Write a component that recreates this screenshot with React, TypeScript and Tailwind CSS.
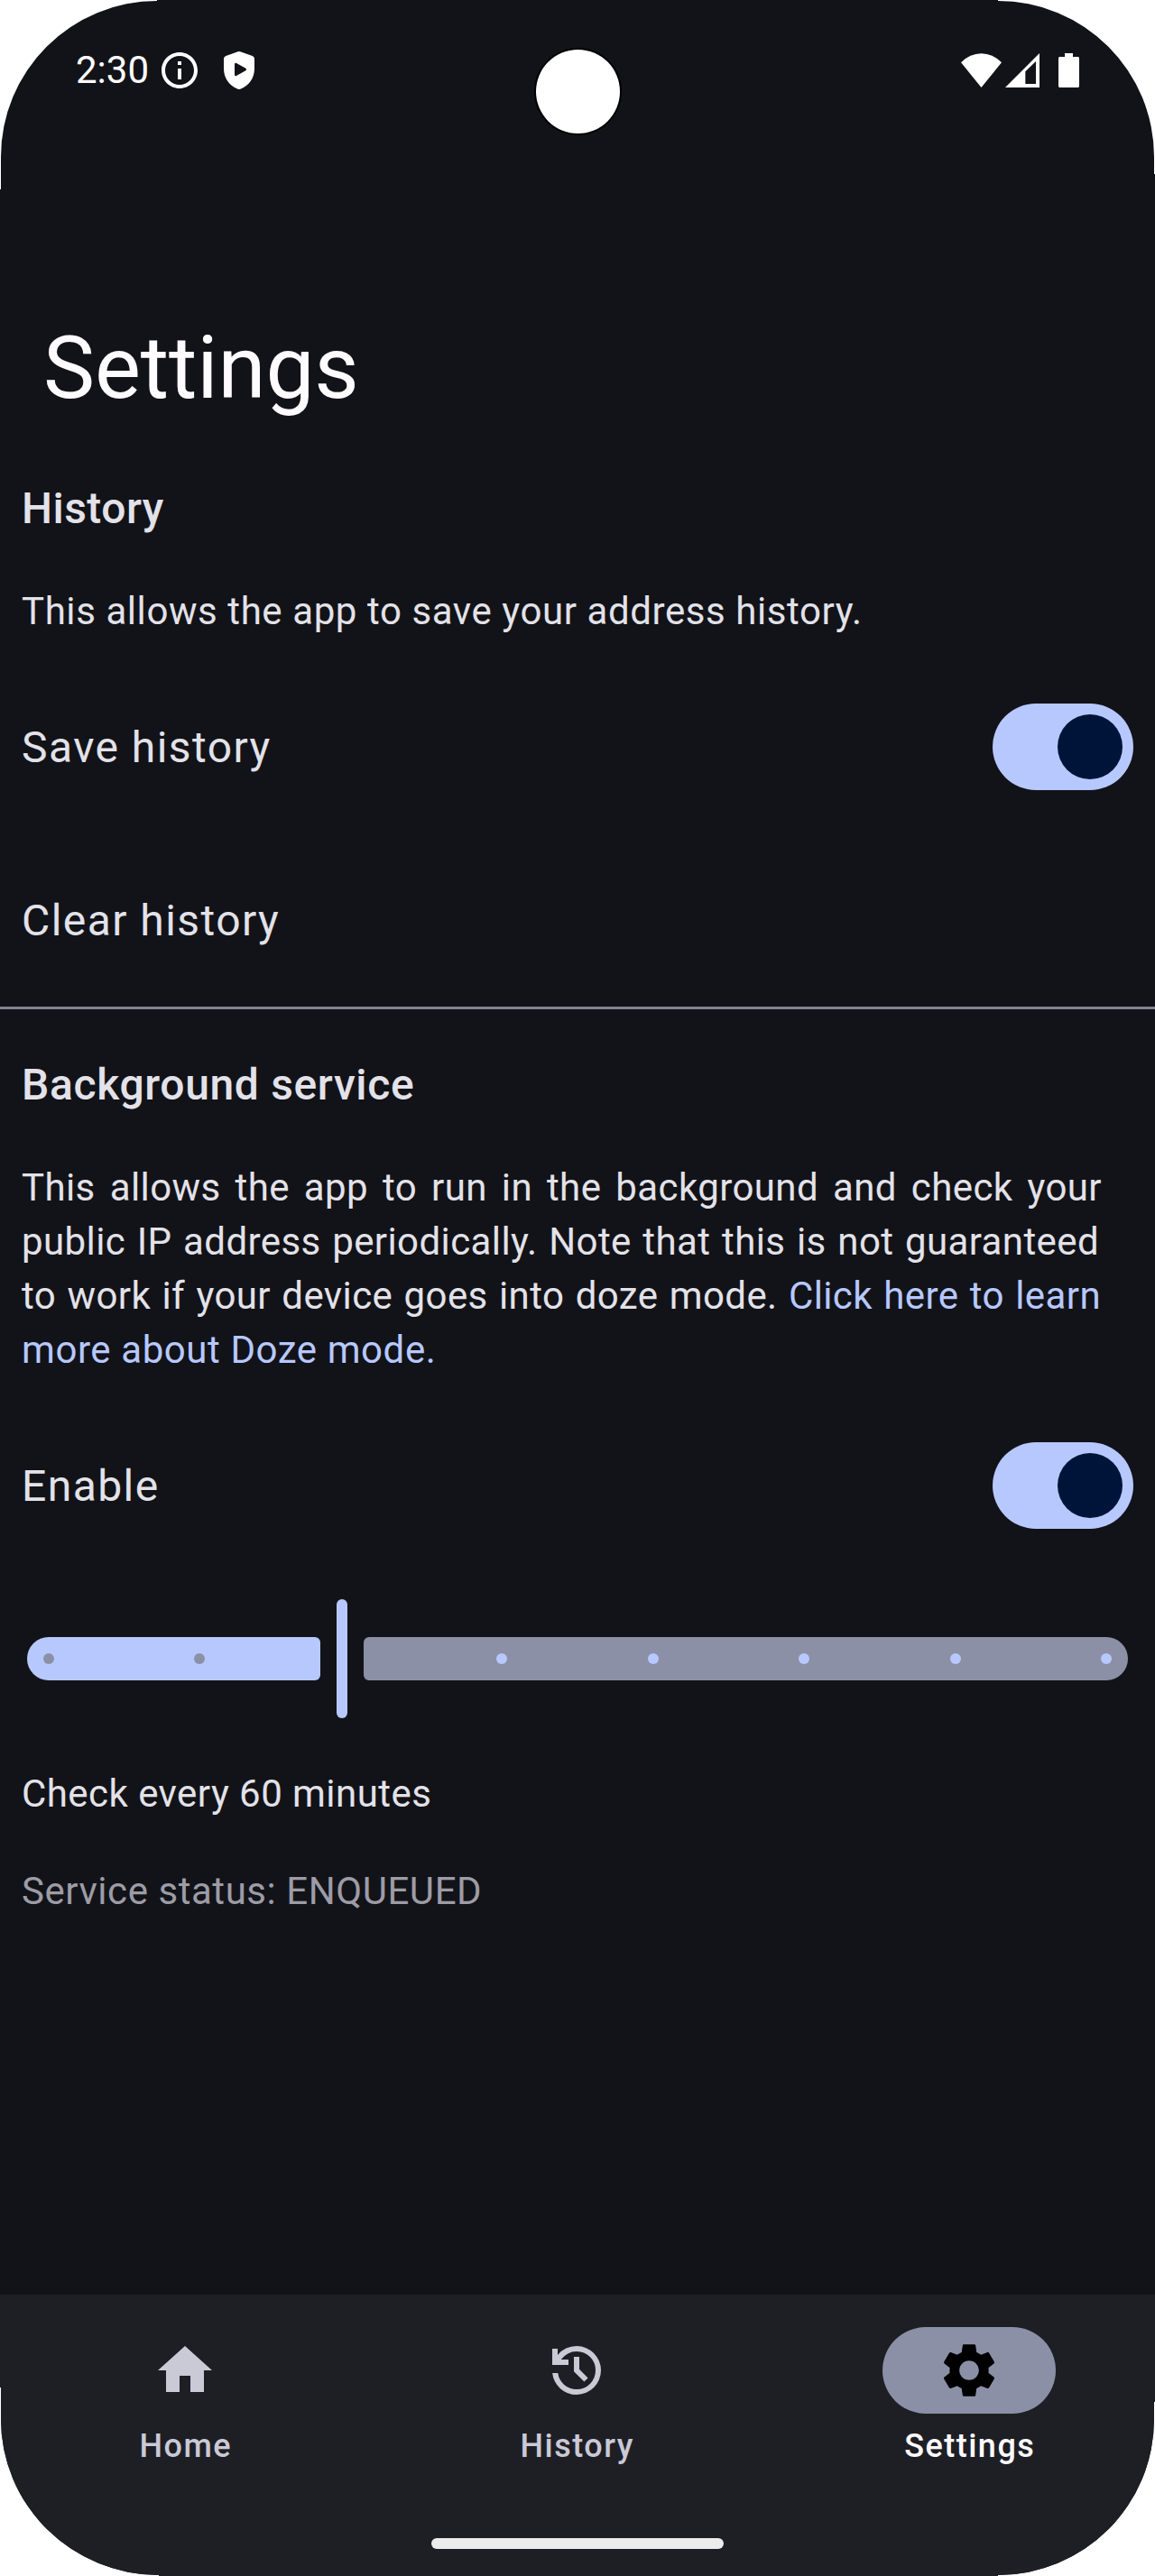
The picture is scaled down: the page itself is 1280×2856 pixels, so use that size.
import type { ReactNode } from "react";
import { MdHome, MdSettings } from "react-icons/md";

const SCREEN_CLIP =
  "path('M0 210 H1 V174 A173 173 0 0 1 174 1 V0 H1106 V1 A173 173 0 0 1 1279 174 V193 H1280 V2663 H1279 V2682 A173 173 0 0 1 1106 2855 V2856 H176 V2855 A175 173 0 0 1 1 2682 V2647 H0 Z')";

function StatusBar() {
  return (
    <header className="relative flex h-[156px] items-center pl-[84px] pr-[84px]">
      <span className="w-[81px] text-[42px] leading-[60px] text-white">2:30</span>
      <svg className="ml-[10px] size-12" viewBox="0 0 24 24" fill="white">
        <path d="M11 7h2v2h-2zm0 4h2v6h-2zm1-9C6.48 2 2 6.48 2 12s4.480 10 10 10 10-4.480 10-10S17.520 2 12 2zm0 18c-4.410 0-8-3.590-8-8s3.590-8 8-8 8 3.590 8 8-3.590 8-8 8z" />
      </svg>
      <svg className="ml-[25px] h-[42px] w-[34px]" viewBox="0 0 102 126" fill="white">
        <path
          fillRule="evenodd"
          d="M47 1Q51 -1 55 1L95 15Q102 18 102 25V57C102 90 82 115 55 125Q51 127 47 125C20 115 0 90 0 57V25Q0 18 7 15ZM36 42V78Q37 83 42 81L73 64Q77 60 73 56L42 39Q37 37 36 42Z"
        />
      </svg>
      <div className="ml-auto flex items-center">
        <svg className="h-[38px] w-[45px]" viewBox="0 0 135 114" fill="white">
          <path d="M0 31Q30 1 67.500 1Q105 1 135 31L67.500 114Z" />
        </svg>
        <svg className="ml-1 h-[38px] w-[38px]" viewBox="0 0 114 114" fill="white">
          <path fillRule="evenodd" d="M0 114L114 0V114ZM67 61V102H102V27Z" />
        </svg>
        <svg className="ml-[21px] h-[38px] w-[23px]" viewBox="0 0 23 38" fill="white">
          <path d="M7 0H16V4H22L23 5V37L22 38H1L0 37V5L1 4H7Z" />
        </svg>
      </div>
      {/* Front camera cut-out */}
      <div className="absolute left-[591.5px] top-[53px] size-[97px] rounded-full bg-black pl-[2px] pt-[1.5px]">
        <div className="size-[93px] rounded-full bg-white" />
      </div>
    </header>
  );
}

function Toggle() {
  return (
    <button
      role="switch"
      aria-checked="true"
      className="flex h-24 w-[156px] items-center justify-end rounded-full bg-[#b7c8ff] pr-3"
    >
      <span className="size-[72px] rounded-full bg-[#001439]" />
    </button>
  );
}

function Row({ label, children }: { label: string; children?: ReactNode }) {
  return (
    <div className="flex h-24 items-center justify-between">
      <span className="pt-[2px] text-[48px] leading-[72px] tracking-[1.44px]">{label}</span>
      {children}
    </div>
  );
}

function Tick({ className }: { className: string }) {
  return <span className={`size-3 shrink-0 rounded-full ${className}`} />;
}

function IntervalSlider() {
  return (
    <div className="mx-[6px] flex h-[132px] items-center">
      <div className="flex h-12 w-[324.6px] items-center rounded-l-[24px] rounded-r-[6px] bg-[#b7c8ff] pl-[18px]">
        <Tick className="bg-[#8b90a6]" />
        <Tick className="ml-[155.4px] bg-[#8b90a6]" />
      </div>
      <div className="mx-[18px] h-[132px] w-3 rounded-full bg-[#b7c8ff]" />
      <div className="flex h-12 flex-1 items-center justify-between rounded-l-[6px] rounded-r-[24px] bg-[#8b90a6] pl-[147.7px] pr-[18px]">
        <Tick className="bg-[#b7c8ff]" />
        <Tick className="bg-[#b7c8ff]" />
        <Tick className="bg-[#b7c8ff]" />
        <Tick className="bg-[#b7c8ff]" />
        <Tick className="bg-[#b7c8ff]" />
      </div>
    </div>
  );
}

function NavItem({ label, active, children }: { label: string; active?: boolean; children: ReactNode }) {
  return (
    <div className="flex flex-col items-center">
      <div
        className={
          active
            ? "flex h-24 w-48 items-center justify-center rounded-full bg-[#8b90a6] text-black"
            : "flex h-24 w-48 items-center justify-center text-[#cac9d6]"
        }
      >
        {children}
      </div>
      <span
        className={
          active
            ? "mt-3 pl-[1.5px] text-[36px] font-medium leading-[48px] tracking-[1.5px] text-[#fefbff]"
            : "mt-3 pl-[1.5px] text-[36px] font-medium leading-[48px] tracking-[1.5px] text-[#cac9d6]"
        }
      >
        {label}
      </span>
    </div>
  );
}

export default function App() {
  return (
    <div className="h-[2856px] w-[1280px] bg-white">
      <div
        className="flex h-[2856px] w-[1280px] flex-col bg-[#121318] font-['Roboto',sans-serif] text-[#e3e2e9]"
        style={{ clipPath: SCREEN_CLIP }}
      >
        <StatusBar />
        <h1 className="mt-48 px-12 text-[96px] leading-[120px] tracking-[-0.1px] text-[#fefbff]">Settings</h1>

        <section className="mt-[60px] px-6">
          <h2 className="text-[48px] font-medium leading-[72px] tracking-[0.45px]">History</h2>
          <p className="mt-12 text-[42px] leading-[60px] tracking-[0.58px]">
            This allows the app to save your address history.
          </p>
          <div className="mt-[72px] flex flex-col gap-24">
            <Row label="Save history">
              <Toggle />
            </Row>
            <Row label="Clear history" />
          </div>
        </section>

        <hr className="mt-12 h-[3px] border-0 bg-[#83848f]" />

        <section className="mt-12 px-6">
          <h2 className="text-[48px] font-medium leading-[72px] tracking-[0.65px]">Background service</h2>
          <p className="mt-12 whitespace-nowrap text-[42px] leading-[60px] tracking-[0.4px]">
            <span className="block w-[1197px] [text-align-last:justify]">
              This allows the app to run in the background and check your
            </span>
            <span className="block w-[1194px] [text-align-last:justify]">
              public IP address periodically. Note that this is not guaranteed
            </span>
            <span className="block w-[1196px] [text-align-last:justify]">
              to work if your device goes into doze mode.{" "}
              <span className="text-[#b7c8ff]">Click here to learn</span>
            </span>
            <span className="block tracking-[0.58px] text-[#b7c8ff]">more about Doze mode.</span>
          </p>
          <div className="mt-[72px]">
            <Row label="Enable">
              <Toggle />
            </Row>
          </div>
          <div className="mt-[78px]">
            <IntervalSlider />
          </div>
          <p className="mt-[54px] text-[42px] leading-[60px] tracking-[0.45px]">Check every 60 minutes</p>
          <p className="mt-12 text-[42px] leading-[60px] tracking-[0.55px] text-[#9d9ca6]">
            Service status: ENQUEUED
          </p>
        </section>

        <nav className="mt-auto flex h-[312px] flex-col items-center bg-[#1e1f25] pt-9">
          <div className="grid w-full grid-cols-[410px_410px_412px] gap-6">
            <NavItem label="Home">
              <MdHome className="size-[72px]" />
            </NavItem>
            <NavItem label="History">
              <svg className="size-[72px]" viewBox="0 -960 960 960" fill="currentColor">
                <path d="M480-120q-138 0-240.500-91.500T122-440h82q14 104 92.500 172T480-200q117 0 198.500-81.500T760-480q0-117-81.500-198.500T480-760q-69 0-129 32t-101 88h110v80H120v-240h80v94q51-64 124.500-99T480-840q75 0 140.500 28.500t114 77q48.500 48.500 77 114T840-480q0 75-28.500 140.500t-77 114q-48.500 48.500-114 77T480-120Zm112-192L440-464v-216h80v184l128 128-56 56Z" />
              </svg>
            </NavItem>
            <NavItem label="Settings" active>
              <MdSettings className="size-[72px]" />
            </NavItem>
          </div>
          <div className="mt-[78px] h-3 w-[324px] rounded-full bg-[#ececec]" />
        </nav>
      </div>
    </div>
  );
}
